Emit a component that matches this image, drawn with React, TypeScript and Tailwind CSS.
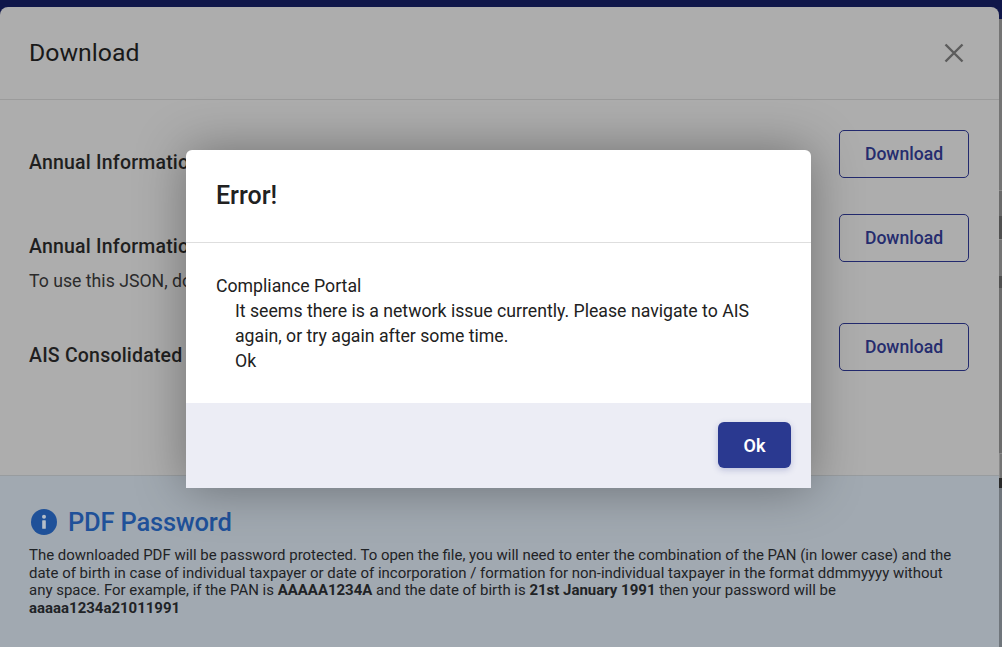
import React from "react";

function DownloadButton() {
  return (
    <button className="w-[130px] h-[48px] shrink-0 rounded-[5px] border border-[#232a6e] text-[17.6px] font-medium text-[#252c6e]">
      Download
    </button>
  );
}

function RightStrip() {
  return (
    <div className="w-[3px] flex flex-col bg-[#747474]">
      <div className="h-[12px] bg-[#10174a]" />
      <div className="h-[172px] border-b border-[#8a8a8a]" />
      <div className="h-[25px] bg-[#6a6a6a]" />
      <div className="h-[24px] border-b border-[#8a8a8a] bg-[#505050]" />
      <div className="h-[36px]" />
      <div className="h-[12px] bg-[#505050]" />
      <div className="h-[165px] bg-[#6c6c6c]" />
      <div className="h-[25px] border-l border-t border-[#8a8a8a]" />
      <div className="h-[10px] bg-[#2a2a2a]" />
      <div className="flex-1 bg-[#70767c]" />
    </div>
  );
}

export default function App() {
  return (
    <div className="relative w-[1002px] h-[647px] overflow-hidden bg-[#10174a] pt-[7px] flex items-stretch font-['Roboto',sans-serif]">
      <div className="w-[999px] h-[640px] rounded-t-[8px] overflow-hidden bg-[#adadad] flex flex-col">
        <div className="h-[93px] shrink-0 border-b border-[#9b9b9b] pl-[29px] pr-[36px] flex items-center justify-between">
          <h1 className="text-[24.8px] font-normal text-[#191919] pb-[1px]">Download</h1>
          <svg viewBox="0 0 20 20" className="w-[20px] h-[20px] mr-[-1px] text-[#5c5c5c]" fill="none" stroke="currentColor" strokeWidth="2.4">
            <path d="M1.5 1.5 18.5 18.5M18.5 1.5 1.5 18.5" />
          </svg>
        </div>
        <div className="flex-1 pl-[29px] pr-[30px]">
          <div className="flex items-start justify-between mt-[30px] h-[48px]">
            <div className="pt-[21px] text-[19.5px] tracking-[0.2px] leading-[24px] font-medium text-[#1f1f1f] whitespace-nowrap">Annual Information Statement (AIS) - PDF</div>
            <DownloadButton />
          </div>
          <div className="flex items-start justify-between mt-[36px] h-[48px]">
            <div className="pt-[21px]">
              <div className="text-[19.5px] tracking-[0.2px] font-medium leading-[24px] text-[#1f1f1f] whitespace-nowrap">Annual Information Statement (AIS) - JSON</div>
              <div className="text-[17.7px] leading-[24px] mt-[10px] text-[#2b2b2b] whitespace-nowrap">To use this JSON, download the AIS Utility</div>
            </div>
            <DownloadButton />
          </div>
          <div className="flex items-start justify-between mt-[61px] h-[48px]">
            <div className="pt-[21px] text-[19.5px] tracking-[0.2px] leading-[24px] font-medium text-[#1f1f1f] whitespace-nowrap">AIS Consolidated Report</div>
            <DownloadButton />
          </div>
        </div>
        <div className="h-[172px] shrink-0 border-t border-[#989c9f] bg-[#a1a9b1] pl-[29px] pr-[40px] pt-[31px]">
          <div className="flex items-center gap-[11px] h-[30px] pl-[2px]">
            <svg viewBox="0 0 26 26" className="w-[26px] h-[26px] shrink-0 mb-[1px]">
              <circle cx="13" cy="13" r="13" fill="#1f5199" />
              <rect x="11.2" y="11.2" width="3.6" height="8.6" rx="0.6" fill="#b5bec8" />
              <circle cx="13" cy="7.8" r="2" fill="#b5bec8" />
            </svg>
            <h2 className="text-[25.5px] font-medium tracking-[-0.2px] text-[#1f5199]">PDF Password</h2>
          </div>
          <p className="mt-[10px] text-[14.97px] leading-[17.7px] text-[#1f2326] w-[930px]">
            The downloaded PDF will be password protected. To open the file, you will need to enter the combination of the PAN (in lower case) and the date of birth in case of individual taxpayer or date of incorporation / formation for non-individual taxpayer in the format ddmmyyyy without any space. For example, if the PAN is <b className="font-bold">AAAAA1234A</b> and the date of birth is <b className="font-bold">21st January 1991</b> then your password will be <b className="font-bold">aaaaa1234a21011991</b>
          </p>
        </div>
      </div>
      <RightStrip />

      <div className="absolute left-[186px] top-[150px] w-[625px] h-[338px] rounded-t-[6px] overflow-hidden bg-white shadow-[0_0_50px_rgba(0,0,0,0.35)] flex flex-col">
        <div className="h-[93px] shrink-0 border-b border-[#dedede] pl-[30px] flex items-center">
          <h2 className="text-[25px] font-medium text-[#212121]">Error!</h2>
        </div>
        <div className="flex-1 pl-[30px] pr-[50px] pt-[31px] text-[17.7px] leading-[25px] text-[#212121]">
          <div>Compliance Portal</div>
          <div className="pl-[19px]">
            <div>It seems there is a network issue currently. Please navigate to AIS again, or try again after some time.</div>
            <div>Ok</div>
          </div>
        </div>
        <div className="h-[85px] shrink-0 bg-[#ecedf5] pr-[20px] flex items-start justify-end pt-[19px]">
          <button className="w-[73px] h-[46px] rounded-[6px] bg-[#2a3990] text-[18px] font-semibold text-white shadow-[0_2px_6px_rgba(42,57,144,0.25)]">Ok</button>
        </div>
      </div>
    </div>
  );
}
